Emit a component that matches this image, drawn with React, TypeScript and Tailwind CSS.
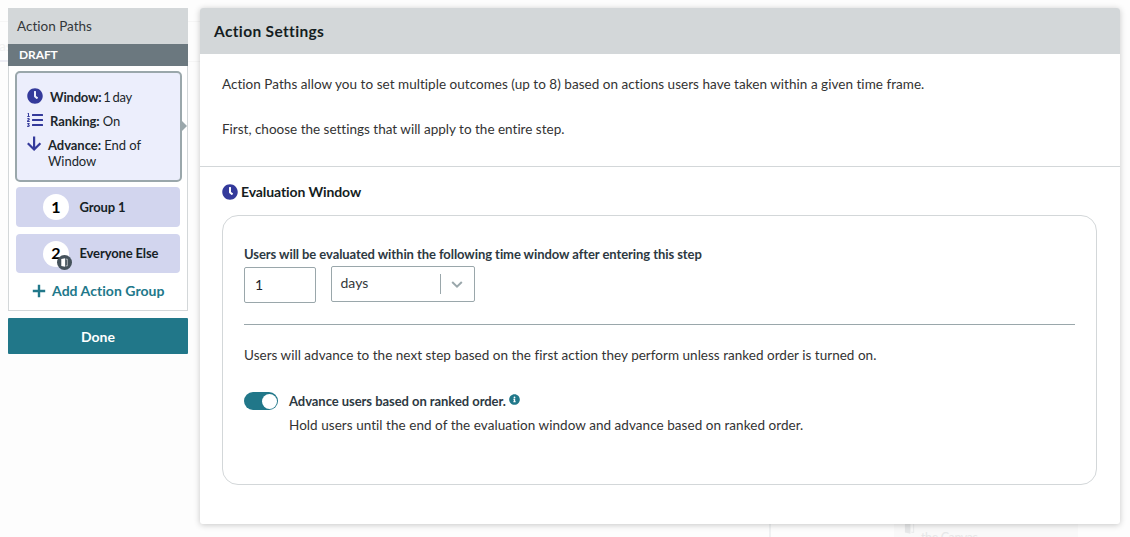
import { FaClock, FaListOl, FaInfoCircle } from 'react-icons/fa';

function Door({ className }: { className: string }) {
  return (
    <svg viewBox="0 0 14 14" className={className}>
      <path d="M2 1.6 8 .4v13.2l-6-1.2z" fill="currentColor" />
      <path d="M9 1.8h2.4v10.4H9" fill="none" stroke="currentColor" strokeOpacity=".7" strokeWidth="1.2" />
    </svg>
  );
}

function Group({ n, label, exit }: { n: number; label: string; exit?: boolean }) {
  return (
    <div className={`flex w-[164px] items-center rounded-[4px] bg-[#d2d5ee] pl-[27px] ${exit ? 'h-[39px]' : 'h-10'}`}>
      <div className="relative flex size-[26px] items-center justify-center rounded-full bg-white text-[16px] font-bold text-black">
        <span className="-mt-px">{n}</span>
        {exit && (
          <span className="absolute top-[14px] left-[14px] flex size-[15px] items-center justify-center rounded-full bg-[#45525b] text-white">
            <Door className="size-[9px]" />
          </span>
        )}
      </div>
      <span className="mt-px ml-[10.5px] text-[13px] font-bold tracking-[-0.14px] whitespace-nowrap text-[#171f26]">{label}</span>
    </div>
  );
}

function Sidebar() {
  return (
    <aside className="relative w-[180px] shrink-0">
      <div className="h-9 bg-[#d3d7d9] pl-[9px] text-[13.5px] leading-9 text-[#33383b]">Action Paths</div>
      <div className="h-[22px] bg-[#6b787f] pl-[11px] text-[12px] leading-[22px] font-bold tracking-[-0.1px] text-white">DRAFT</div>
      <div className="h-[245px] border border-t-0 border-[#d3d7d9] bg-white pt-[5px] pl-[6px]">
        <div className="relative flex h-[111px] w-[167px] flex-col rounded-[5px] border-2 border-[#9aa7ab] bg-[#eceefc] pt-[15px] pl-[10px] text-[13px] leading-4 text-[#20262b]">
          <div className="flex h-6">
            <FaClock className="mr-[7px] size-4 text-[#343a9b]" />
            <p className="pt-px tracking-[-0.2px]"><b>Window:</b> <span className="-mx-[1.3px]">1</span> day</p>
          </div>
          <div className="flex h-6">
            <FaListOl className="mr-[7px] size-4 text-[#343a9b]" />
            <p className="pt-px tracking-[-0.05px]"><b>Ranking:</b> On</p>
          </div>
          <div className="flex">
            <svg className="mr-[6px] size-[15px] shrink-0" viewBox="0 0 15 15" fill="none" stroke="#343a9b" strokeWidth="2.2"><path d="M7.1 .5v12M.8 7.2l6.3 6.3 6.3-6.3" /></svg>
            <p className="w-[110px] pt-px tracking-[-0.05px]"><b>Advance:</b> End of Window</p>
          </div>
          <span className="absolute top-[47px] -right-[7px] border-y-[6px] border-l-[6px] border-y-transparent border-l-[#9aa7ab]" />
        </div>
        <div className="mt-[5px] ml-px flex flex-col gap-[7px]">
          <Group n={1} label="Group 1" />
          <Group n={2} label="Everyone Else" exit />
        </div>
        <button className="mt-[7px] ml-[17px] flex h-[22px] items-center text-[14px] font-bold tracking-[0.05px] whitespace-nowrap text-[#21788a]">
          <svg className="mr-[6px] size-[14px]" viewBox="0 0 14 14" fill="none" stroke="currentColor" strokeWidth="2.4"><path d="M7 .8v12.4M.8 7h12.4" /></svg>
          <span className="-mt-px">Add Action Group</span>
        </button>
      </div>
      <button className="mt-[7px] block h-9 w-full rounded-[1px] bg-[#217789] text-[14px] font-bold text-white">Done</button>
    </aside>
  );
}

function Backdrop() {
  return (
    <div className="absolute inset-0 overflow-hidden text-[#e6e7e8]">
      <div className="absolute top-[21px] left-0 h-px w-[200px] bg-[#f6f6f6]" />
      <div className="absolute top-[60px] left-0 h-[2px] w-2 bg-[#ededf4]" />
      <div className="absolute top-[61px] left-[188px] h-px w-3 bg-[#f6f6f6]" />
      <span className="absolute top-[35px] -left-px text-[14px] text-[#f1f1f1]">as</span>
      <div className="absolute top-[520px] left-[769px] h-[17px] w-[2px] bg-[#eff1f2]" />
      <div className="absolute top-[520px] left-[894px] h-[17px] w-[184px] bg-[#f9f9f9]" />
      <Door className="absolute top-[521px] left-[903px] size-[13px]" />
      <span className="absolute top-[530px] left-[921px] text-[12.5px] leading-[15px] tracking-[-0.4px]">the Canvas</span>
    </div>
  );
}

export default function App() {
  return (
    <div className="relative flex h-[537px] w-[1130px] overflow-hidden bg-[#fdfdfd] pt-2 pl-2 font-['Lato',sans-serif] [font-variant-ligatures:none]">
      <Backdrop />
      <Sidebar />
      <main className="relative ml-3 h-[516px] w-[920px] shrink-0 rounded-[3px] bg-white shadow-[0_1px_6px_rgba(0,0,0,0.22)]">
        <h1 className="h-[46px] rounded-t-[3px] bg-[#d3d7d9] pl-[14px] text-[15.5px] leading-[46px] font-bold tracking-[0.35px] text-[#151d22]">Action Settings</h1>
        <div className="h-[113px] border-b border-[#d3d7d9] pt-[19px] pl-[22px] text-[13.5px] leading-[22px] text-[#333]">
          <p className="mb-[23px] tracking-[0.035px]">Action Paths allow you to set multiple outcomes (up to 8) based on actions users have taken within a given time frame.</p>
          <p>First, choose the settings that will apply to the entire step.</p>
        </div>
        <h2 className="flex h-[48px] items-center pl-[22px] text-[14px] font-bold tracking-[-0.1px] text-[#151d22]">
          <FaClock className="mt-[2px] mr-[3px] size-4 text-[#343a9b]" />
          Evaluation Window
        </h2>
        <section className="ml-[22px] h-[270px] w-[875px] rounded-[16px] border border-[#d3d7d9] px-[21px] pt-[28px]">
          <p className="h-[22px] text-[13px] leading-5 font-bold tracking-[-0.07px] text-[#2d3942]">Users will be evaluated within the following time window after entering this step</p>
          <div className="flex gap-[15px]">
            <div className="mt-px h-9 w-[72px] rounded-[2px] border border-[#9aa7ab] pl-[10px] text-[14px] leading-[33px] text-[#20262b]">1</div>
            <div className="flex h-9 w-36 items-center rounded-[2px] border border-[#9aa7ab] text-[14px] text-[#33383b]">
              <span className="-mt-[3px] w-[108px] pl-[8.5px]">days</span>
              <span className="h-5 w-px bg-[#9aa7ab]" />
              <svg className="ml-[9px] h-[14px] w-[14px]" viewBox="0 0 14 14" fill="none" stroke="#9aa7ab" strokeWidth="2"><path d="m2.2 5 4.8 4.6L11.8 5" /></svg>
            </div>
          </div>
          <div className="mt-[21px] h-px w-[831px] bg-[#9aa7ab]" />
          <p className="mt-[19px] text-[13.5px] leading-[22px] tracking-[0.02px] text-[#333]">Users will advance to the next step based on the first action they perform unless ranked order is turned on.</p>
          <div className="mt-[25px] flex">
            <div className="mt-px flex h-[18px] w-[34px] items-center justify-end rounded-full bg-[#217789] pr-px"><span className="size-[15px] rounded-full bg-white" /></div>
            <div className="ml-[11px]">
              <p className="flex h-5 items-center pt-px text-[13px] font-bold tracking-[-0.05px] text-[#2d3942]">Advance users based on ranked order.<FaInfoCircle className="mb-[5px] ml-[3px] size-[11px] text-[#21788a]" /></p>
              <p className="mt-[3px] text-[13.5px] leading-[22px] tracking-[0.045px] text-[#333]">Hold users until the end of the evaluation window and advance based on ranked order.</p>
            </div>
          </div>
        </section>
      </main>
    </div>
  );
}
